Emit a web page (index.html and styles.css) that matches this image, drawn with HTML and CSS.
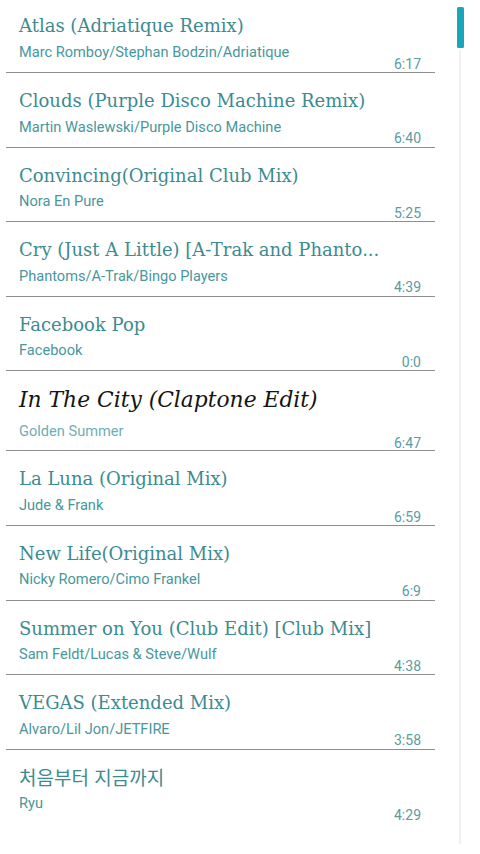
FILE: index.html
```html
<!DOCTYPE html>
<html lang="en">
<head>
<meta charset="utf-8">
<title>Tracks</title>
<link rel="stylesheet" href="styles.css">
</head>
<body>
<div class="screen">
  <ul class="tracks">
    <li class="row"><div class="title">Atlas (Adriatique Remix)</div><div class="artist">Marc Romboy/Stephan Bodzin/Adriatique</div><div class="time">6:17</div></li>
    <li class="row"><div class="title">Clouds (Purple Disco Machine Remix)</div><div class="artist">Martin Waslewski/Purple Disco Machine</div><div class="time">6:40</div></li>
    <li class="row"><div class="title">Convincing(Original Club Mix)</div><div class="artist">Nora En Pure</div><div class="time">5:25</div></li>
    <li class="row"><div class="title">Cry (Just A Little) [A-Trak and Phanto...</div><div class="artist">Phantoms/A-Trak/Bingo Players</div><div class="time">4:39</div></li>
    <li class="row"><div class="title">Facebook Pop</div><div class="artist">Facebook</div><div class="time">0:0</div></li>
    <li class="row current"><div class="title">In The City (Claptone Edit)</div><div class="artist">Golden Summer</div><div class="time">6:47</div></li>
    <li class="row"><div class="title">La Luna (Original Mix)</div><div class="artist">Jude &amp; Frank</div><div class="time">6:59</div></li>
    <li class="row"><div class="title">New Life(Original Mix)</div><div class="artist">Nicky Romero/Cimo Frankel</div><div class="time">6:9</div></li>
    <li class="row"><div class="title">Summer on You (Club Edit) [Club Mix]</div><div class="artist">Sam Feldt/Lucas &amp; Steve/Wulf</div><div class="time">4:38</div></li>
    <li class="row"><div class="title">VEGAS (Extended Mix)</div><div class="artist">Alvaro/Lil Jon/JETFIRE</div><div class="time">3:58</div></li>
    <li class="row last"><div class="title korean" lang="ko">처음부터 지금까지</div><div class="artist">Ryu</div><div class="time">4:29</div></li>
  </ul>
  <div class="scrollbar">
    <div class="thumb"></div>
    <div class="track"></div>
  </div>
</div>
</body>
</html>
```
FILE: styles.css
```css
html, body {
  margin: 0;
  padding: 0;
  background: #ffffff;
}

.screen {
  display: flex;
  width: 480px;
  height: 854px;
  overflow: hidden;
}

.tracks {
  list-style: none;
  margin: -1.6px 0 0 6px;
  padding: 0;
  width: 429px;
  flex: none;
}

.row {
  display: grid;
  grid-template-columns: 1fr auto;
  grid-template-rows: auto auto;
  box-sizing: border-box;
  padding: 16px 14px 8.1px 13px;
  border-bottom: 1px solid #8e8e8e;
}

.row.last {
  border-bottom: none;
}

.title {
  grid-column: 1 / -1;
  font-family: "DejaVu Serif", "Liberation Serif", serif;
  font-size: 18px;
  line-height: 24px;
  color: #3c8b90;
  white-space: nowrap;
}

.title.korean {
  font-family: "Noto Sans CJK KR", "Noto Sans", sans-serif;
  font-size: 19px;
  margin-top: -1px;
  margin-bottom: 1px;
}

.artist {
  grid-column: 1;
  padding-top: 1.5px;
  font-family: Roboto, "Noto Sans", sans-serif;
  font-size: 14.6px;
  line-height: 24px;
  color: #47979d;
  white-space: nowrap;
}

.time {
  grid-column: 2;
  align-self: end;
  font-family: Roboto, "Noto Sans", sans-serif;
  font-size: 14px;
  line-height: 16px;
  margin-bottom: -7.7px;
  color: #5a9ca2;
}

.row.current {
  padding-top: 12px;
  padding-bottom: 7.5px;
}

.row.current .title {
  font-style: italic;
  font-size: 21.8px;
  line-height: 34px;
  color: #141414;
}

.row.current .artist {
  color: #6eaeb4;
}

.scrollbar {
  display: flex;
  flex-direction: column;
  align-items: center;
  width: 8px;
  margin-left: 21px;
  padding-bottom: 10px;
}

.thumb {
  width: 7px;
  height: 41px;
  margin-top: 7px;
  border-radius: 1.5px;
  background: #18a6b8;
  flex: none;
}

.track {
  width: 2px;
  flex: 1;
  margin-top: 2px;
  background: #f1f1f1;
}
```
